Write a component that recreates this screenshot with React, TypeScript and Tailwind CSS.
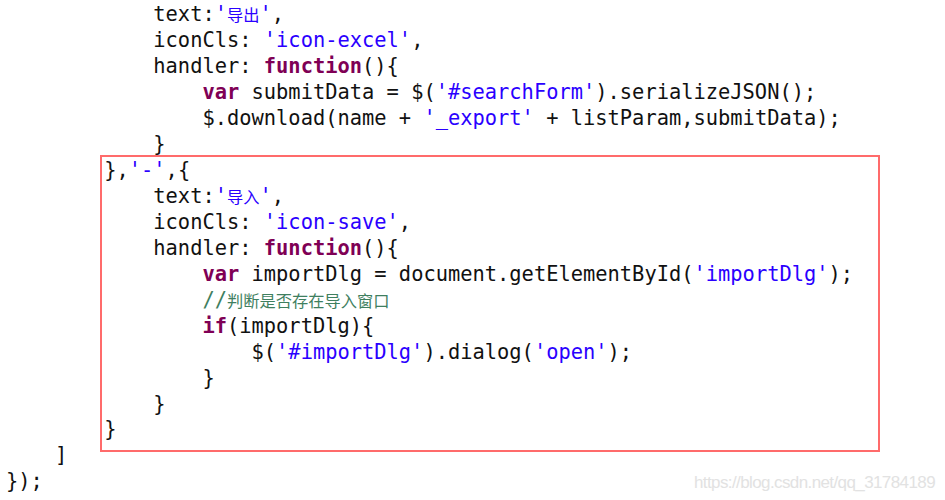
type Tok = [kind: 'p' | 'k' | 's' | 'c', text: string]

const tone: Record<Tok[0], string> = {
    p: 'text-[#111111]',
    k: 'text-[#7f0055] font-bold',
    s: 'text-[#2a00ff]',
    c: 'text-[#3f7f5f]',
}

// lines above the red box
const head: Tok[][] = [
    [['p', "        },"], ['s', "'-'"], ['p', ',{']],
    [['p', '            text:'], ['s', "'导出'"], ['p', ',']],
    [['p', '            iconCls: '], ['s', "'icon-excel'"], ['p', ',']],
    [['p', '            handler: '], ['k', 'function'], ['p', '(){']],
    [
        ['p', '                '],
        ['k', 'var'],
        ['p', ' submitData = $('],
        ['s', "'#searchForm'"],
        ['p', ').serializeJSON();'],
    ],
    [
        ['p', '                $.download(name + '],
        ['s', "'_export'"],
        ['p', ' + listParam,submitData);'],
    ],
    [['p', '            }']],
]

// lines inside the red box
const boxed: Tok[][] = [
    [['p', '        },'], ['s', "'-'"], ['p', ',{']],
    [['p', '            text:'], ['s', "'导入'"], ['p', ',']],
    [['p', '            iconCls: '], ['s', "'icon-save'"], ['p', ',']],
    [['p', '            handler: '], ['k', 'function'], ['p', '(){']],
    [
        ['p', '                '],
        ['k', 'var'],
        ['p', ' importDlg = document.getElementById('],
        ['s', "'importDlg'"],
        ['p', ');'],
    ],
    [['p', '                '], ['c', '//判断是否存在导入窗口']],
    [['p', '                '], ['k', 'if'], ['p', '(importDlg){']],
    [
        ['p', '                    $('],
        ['s', "'#importDlg'"],
        ['p', ').dialog('],
        ['s', "'open'"],
        ['p', ');'],
    ],
    [['p', '                }']],
    [['p', '            }']],
    [['p', '        }']],
]

function Chunk({ text }: { text: string }) {
    const parts = text.split(/([\u4e00-\u9fff]+)/)
    return (
        <>
            {parts.map((part, i) =>
                /[\u4e00-\u9fff]/.test(part) ? (
                    <span
                        key={i}
                        className="font-['Noto_Sans_CJK_SC',sans-serif] text-[16.25px] leading-none"
                    >
                        {part}
                    </span>
                ) : (
                    <span key={i}>{part}</span>
                )
            )}
        </>
    )
}

function CodeLine({ tokens }: { tokens: Tok[] }) {
    return (
        <div className="whitespace-pre h-[25.94px]">
            {tokens.map(([kind, text], i) => (
                <span key={i} className={tone[kind]}>
                    <Chunk text={text} />
                </span>
            ))}
        </div>
    )
}

export default function App() {
    return (
        <div className="w-[945px] h-[500px] overflow-hidden bg-white">
            <div className="mt-[-23.5px] pl-[6px] pr-[10px] flex flex-col font-['DejaVu_Sans_Mono',monospace] text-[20.4px] leading-[25.94px]">
                {head.map((tokens, i) => (
                    <CodeLine key={i} tokens={tokens} />
                ))}
                <div className="relative">
                    {boxed.map((tokens, i) => (
                        <CodeLine key={i} tokens={tokens} />
                    ))}
                    <div className="absolute left-[94px] top-[-3px] w-[780px] h-[297px] border-2 border-[#ff6b6b] pointer-events-none" />
                </div>
                <CodeLine tokens={[['p', '    ]']]} />
                <div className="flex justify-between items-baseline h-[25.94px]">
                    <span className="whitespace-pre text-[#111111]">{'});'}</span>
                    <span className="font-['Liberation_Sans',Arial,sans-serif] text-[17px] tracking-[-0.6px] leading-none text-[#e2e2e2]">
                        https://blog.csdn.net/qq_31784189
                    </span>
                </div>
            </div>
        </div>
    )
}
